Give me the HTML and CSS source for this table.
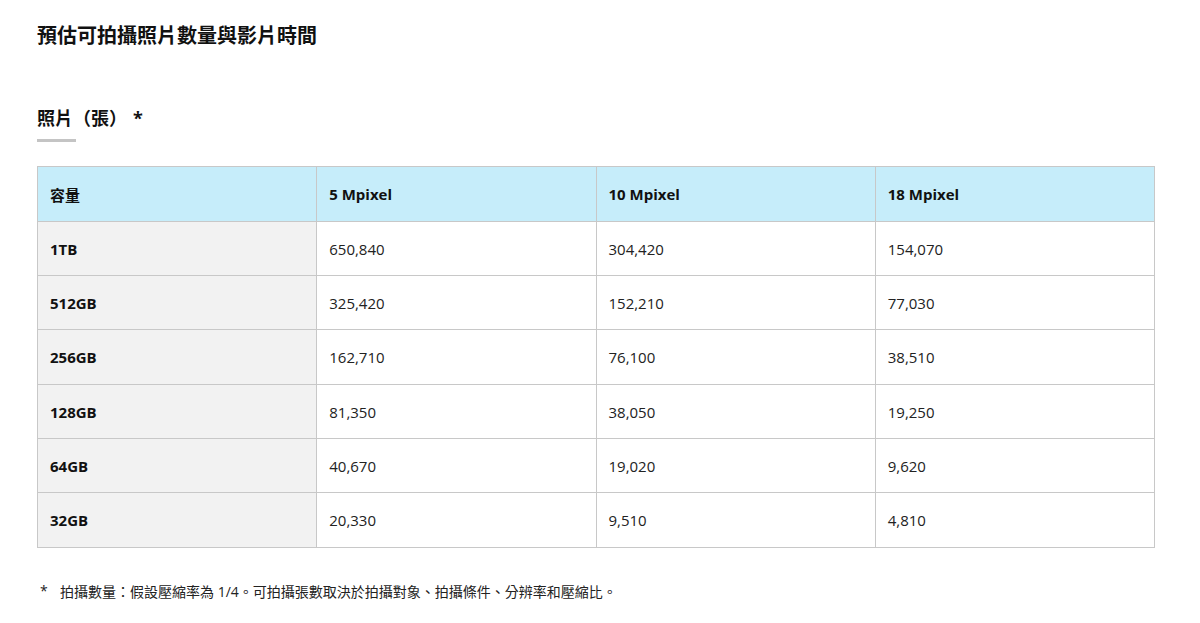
FILE: index.html
```html
<!DOCTYPE html>
<html lang="zh-Hant">
<head>
<meta charset="utf-8">
<link rel="stylesheet" href="styles.css">
</head>
<body>
<main class="page">
  <h1 class="title">預估可拍攝照片數量與影片時間</h1>
  <h2 class="section">照片（張）<span class="star">*</span></h2>
  <table class="cap">
    <thead>
      <tr><th>容量</th><th>5 Mpixel</th><th>10 Mpixel</th><th>18 Mpixel</th></tr>
    </thead>
    <tbody>
      <tr><th>1TB</th><td>650,840</td><td>304,420</td><td>154,070</td></tr>
      <tr><th>512GB</th><td>325,420</td><td>152,210</td><td>77,030</td></tr>
      <tr><th>256GB</th><td>162,710</td><td>76,100</td><td>38,510</td></tr>
      <tr><th>128GB</th><td>81,350</td><td>38,050</td><td>19,250</td></tr>
      <tr><th>64GB</th><td>40,670</td><td>19,020</td><td>9,620</td></tr>
      <tr><th>32GB</th><td>20,330</td><td>9,510</td><td>4,810</td></tr>
    </tbody>
  </table>
  <p class="note"><span class="mark">*</span><span>拍攝數量：假設壓縮率為 1/4。可拍攝張數取決於拍攝對象、拍攝條件、分辨率和壓縮比。</span></p>
</main>
</body>
</html>
```
FILE: styles.css
```css
html, body {
  margin: 0;
  padding: 0;
  background: #fff;
}
body {
  font-family: "Open Sans", "Noto Sans CJK TC", sans-serif;
  color: #111;
}
.page {
  padding: 22px 45px 0 37px;
}
.title {
  margin: 0;
  font-size: 20px;
  font-weight: 700;
  line-height: 28px;
}
.section {
  margin: 54px 0 0;
  font-size: 18px;
  font-weight: 700;
  line-height: 28px;
  display: inline-block;
  position: relative;
  padding-bottom: 10px;
}
.section .star {
  margin-left: 6px;
}
.section::after {
  content: "";
  position: absolute;
  left: 0;
  bottom: 0;
  width: 39px;
  height: 3px;
  background: #c4c4c4;
}
.cap {
  margin-top: 24px;
  width: 1118px;
  border-collapse: collapse;
  table-layout: fixed;
  font-size: 15px;
}
.cap th, .cap td {
  border: 1px solid #c8c8c8;
  height: 53px;
  padding: 0 12px;
  text-align: left;
  vertical-align: middle;
}
.cap thead th,
.cap tbody tr:nth-child(3n) th,
.cap tbody tr:nth-child(3n) td {
  height: 54px;
}
.cap thead th {
  background: #c6edfa;
  font-weight: 700;
}
.cap tbody th {
  background: #f2f2f2;
  font-weight: 700;
}
.cap td {
  font-weight: 400;
  color: #222;
}
.note {
  margin: 33px 0 0;
  font-size: 14px;
  display: flex;
  color: #222;
}
.note .mark {
  width: 20px;
  padding-left: 3px;
}
```
